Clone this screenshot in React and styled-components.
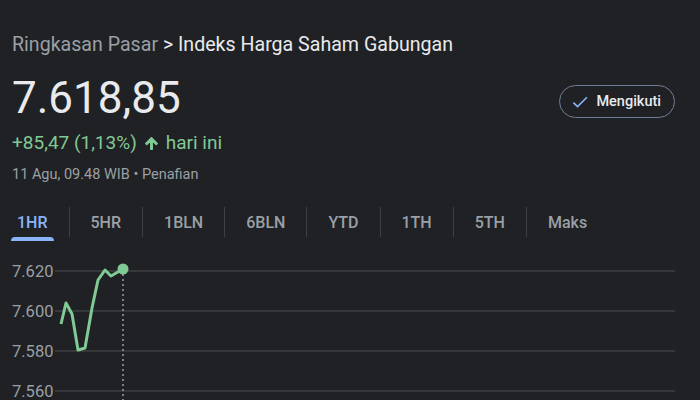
import React from "react";
import styled, { createGlobalStyle } from "styled-components";

const GlobalStyle = createGlobalStyle`
  body {
    margin: 0;
    background: #202124;
    font-family: Roboto, "Noto Sans", Arial, sans-serif;
  }
`;

const Page = styled.div`
  width: 700px;
  height: 400px;
  overflow: hidden;
  background: #202124;
  color: #e8eaed;
`;

const Crumbs = styled.div`
  padding: 33px 12px 0;
  font-size: 19.6px;
  line-height: 24px;
  color: #e8eaed;
`;

const CrumbMuted = styled.span`
  color: #9aa0a6;
`;

const Header = styled.div`
  display: flex;
  justify-content: space-between;
  align-items: flex-start;
  padding: 0 25px 0 12px;
`;

const Quote = styled.div`
  display: flex;
  flex-direction: column;
`;

const Price = styled.div`
  font-size: 44px;
  line-height: 52px;
  margin-top: 15px;
  color: #e8eaed;
`;

const Change = styled.div`
  display: flex;
  align-items: center;
  gap: 6px;
  margin-top: 7px;
  font-size: 19px;
  line-height: 24px;
  color: #81c995;
`;

const Meta = styled.div`
  margin-top: 10px;
  font-size: 14.5px;
  line-height: 20px;
  color: #9aa0a6;
`;

const FollowButton = styled.button`
  display: flex;
  align-items: center;
  gap: 6px;
  margin-top: 28px;
  height: 33px;
  padding: 0 13px 0 10px;
  border: 1.5px solid #6f7f95;
  border-radius: 17px;
  background: transparent;
  color: #e8eaed;
  font-family: inherit;
  font-size: 14.5px;
  font-weight: 500;
`;

const Tabs = styled.div`
  display: flex;
  align-items: stretch;
  margin-top: 22px;
  padding-left: 11px;
`;

const Tab = styled.div`
  position: relative;
  display: flex;
  align-items: center;
  height: 30px;
  padding: ${(p) => (p.$first ? "0 21px 0 6px" : "0 21px")};
  font-size: 16px;
  font-weight: 500;
  color: ${(p) => (p.$active ? "#8ab4f8" : "#9aa0a6")};
  border-left: ${(p) => (p.$first ? "none" : "1px solid #3c4043")};

  &::after {
    content: "";
    display: ${(p) => (p.$active ? "block" : "none")};
    position: absolute;
    left: 0;
    right: 15px;
    bottom: -4px;
    height: 4px;
    border-radius: 4px 4px 0 0;
    background: #8ab4f8;
  }
`;

const Chart = styled.svg`
  display: block;
  margin-top: 18px;
`;

const ArrowUp = () => (
  <svg width="17" height="17" viewBox="0 0 24 24">
    <path d="M4 12l1.41 1.41L11 7.83V20h2V7.83l5.58 5.59L20 12l-8-8-8 8z" fill="#81c995" stroke="#81c995" strokeWidth="2.2" strokeLinejoin="round" />
  </svg>
);

const CheckIcon = () => (
  <svg width="20" height="20" viewBox="0 0 24 24">
    <path d="M9 16.17L4.83 12l-1.42 1.41L9 19 21 7l-1.41-1.41z" fill="#8ab4f8" />
  </svg>
);

const tabs = ["1HR", "5HR", "1BLN", "6BLN", "YTD", "1TH", "5TH", "Maks"];

// chart area starts at y = 255
const points = [
  [61, 69], [66, 48], [72, 59], [78, 95], [85, 93], [92, 53],
  [98, 25], [105, 15], [111, 21], [123, 14],
];
const grid = [
  { y: 16, label: "7.620" },
  { y: 56, label: "7.600" },
  { y: 96, label: "7.580" },
  { y: 136, label: "7.560" },
];

const App = () => {
  const path = points.map((p, i) => `${i ? "L" : "M"}${p[0]} ${p[1]}`).join(" ");
  return (
    <Page>
      <GlobalStyle />
      <Crumbs>
        <CrumbMuted>Ringkasan Pasar</CrumbMuted> &gt; Indeks Harga Saham Gabungan
      </Crumbs>
      <Header>
        <Quote>
          <Price>7.618,85</Price>
          <Change>
            +85,47 (1,13%) <ArrowUp /> hari ini
          </Change>
          <Meta>11 Agu, 09.48 WIB • Penafian</Meta>
        </Quote>
        <FollowButton>
          <CheckIcon />
          Mengikuti
        </FollowButton>
      </Header>
      <Tabs>
        {tabs.map((t, i) => (
          <Tab key={t} $first={i === 0} $active={i === 0}>
            {t}
          </Tab>
        ))}
      </Tabs>
      <Chart width="700" height="145" viewBox="0 0 700 145">
        {grid.map((g) => (
          <g key={g.label}>
            <line x1="55" x2="675" y1={g.y} y2={g.y} stroke="#3c4043" strokeWidth="1.5" />
            <text x="12" y={g.y + 6} fill="#9aa0a6" fontSize="16.5" fontFamily="Roboto, sans-serif">
              {g.label}
            </text>
          </g>
        ))}
        <line x1="123" x2="123" y1="14" y2="145" stroke="#9aa0a6" strokeWidth="1.5" strokeDasharray="2 3" />
        <path d={path} fill="none" stroke="#81c995" strokeWidth="3" strokeLinejoin="round" />
        <circle cx="123" cy="14" r="5.5" fill="#81c995" />
      </Chart>
    </Page>
  );
};

export default App;
